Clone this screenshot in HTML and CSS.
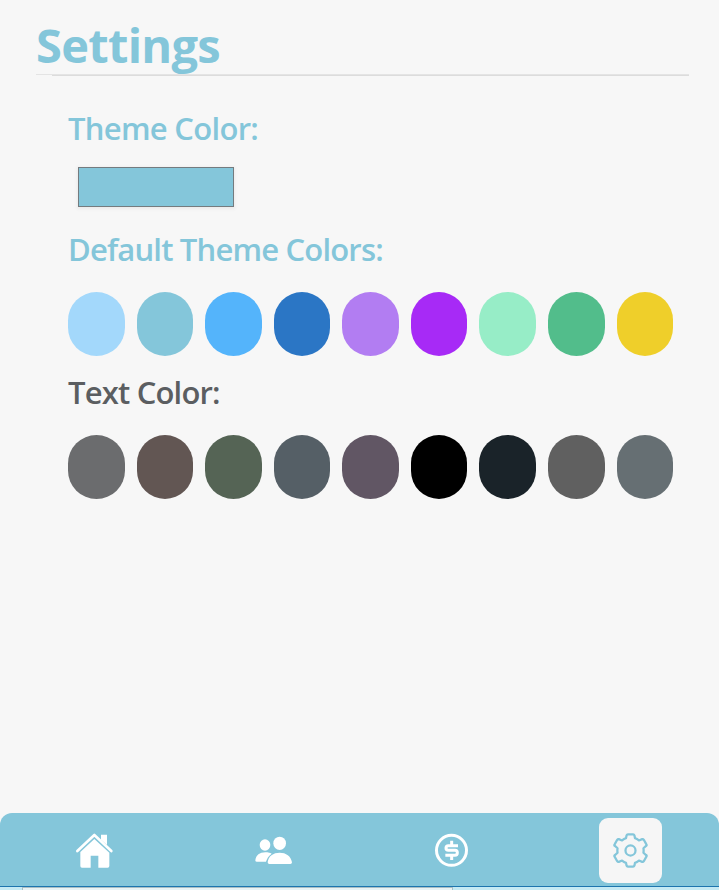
FILE: index.html
```html
<!DOCTYPE html>
<html lang="en">
<head>
<meta charset="utf-8">
<title>Settings</title>
<link rel="stylesheet" href="styles.css">
</head>
<body>
<main>
  <header><h1>Settings</h1><div class="rule"></div></header>
  <section class="options">
    <h2 class="theme-title">Theme Color:</h2>
    <div class="picker"></div>
    <h2 class="defaults-title">Default Theme Colors:</h2>
    <div class="swatches">
      <i style="background:#a3d8fb"></i><i style="background:#84c6da"></i><i style="background:#54b4fb"></i><i style="background:#2b76c5"></i><i style="background:#b27df2"></i><i style="background:#a72af6"></i><i style="background:#97edc7"></i><i style="background:#52bd8b"></i><i style="background:#efcf2a"></i>
    </div>
    <h2 class="text-title">Text Color:</h2>
    <div class="swatches">
      <i style="background:#6b6c6e"></i><i style="background:#625653"></i><i style="background:#556455"></i><i style="background:#555f66"></i><i style="background:#615664"></i><i style="background:#000"></i><i style="background:#1a2329"></i><i style="background:#606060"></i><i style="background:#666f73"></i>
    </div>
  </section>
</main>
<nav>
  <a><svg width="70" height="60" viewBox="0 0 210 180"><path d="M52 93L103 45L154 93" fill="none" stroke="#fff" stroke-width="8" stroke-linecap="round" stroke-linejoin="round"/><path fill="#fff" d="M123 44h18v31l-18-16zM103 57l45 41v40q0 5-5 5h-28v-36H92v36H66q-5 0-5-5V96z"/></svg></a>
  <a class="middle"><svg width="70" height="60" viewBox="0 0 210 180" fill="#fff"><ellipse cx="75" cy="75" rx="16" ry="17"/><ellipse cx="119" cy="70" rx="19" ry="20"/><path d="M46 121c2-16 13-24 30-24 9 0 15 2 19 4-9 6-14 14-17 24H50q-5 0-4-4zM83 127c2-19 17-29 36-29s34 10 37 29q0 5-5 5H88q-5 0-5-5z"/></svg></a>
  <a class="middle"><svg width="70" height="60" viewBox="0 0 210 180" fill="none" stroke="#fff" stroke-width="9"><circle cx="94.500" cy="91" r="45"/><path d="M95 62v12M95 107v13M114 77H85q-7 0-7 7t7 7h20q7 0 7 7.500t-7 7.500H76"/></svg></a>
  <a><span class="active"><svg width="35" height="35" viewBox="-54 -54 108 108" fill="none" stroke="#84c6da" stroke-width="7" stroke-linejoin="round"><path d="M-8-50H8Q11-50 12-47L14-38Q20-36 26-31L36-35Q39-36 41-33L49-19Q51-16 48-14L40-7Q41 0 40 7L48 14Q51 16 49 19L41 33Q39 36 36 35L26 31Q20 36 14 38L12 47Q11 50 8 50H-8Q-11 50-12 47L-14 38Q-20 36-26 31L-36 35Q-39 36-41 33L-49 19Q-51 16-48 14L-40 7Q-41 0-40-7L-48-14Q-51-16-49-19L-41-33Q-39-36-36-35L-26-31Q-20-36-14-38L-12-47Q-11-50-8-50Z"/><circle r="15.500"/></svg></span></a>
</nav>
<footer><div></div></footer>
</body>
</html>
```
FILE: styles.css
```css
* { box-sizing: border-box; }
body {
  margin: 0;
  height: 890px;
  display: flex;
  flex-direction: column;
  overflow: hidden;
  background: #f7f7f7;
  font-family: "Open Sans", "Noto Sans", sans-serif;
  color: #84c6da;
}
main { flex: 1; padding: 0 30px 0 36px; }
header { height: 76px; padding-top: 14px; }
h1 { margin: 0; font-size: 47px; line-height: 62px; height: 60px; font-weight: 700; letter-spacing: -0.7px; }
.rule { width: 653px; height: 2px; border-top: 1px solid #e4e4e4; background: linear-gradient(90deg, transparent 16px, #dcdcdc 16px); }
.options { padding: 0 16px 0 32px; }
h2 { margin: 0; font-size: 31px; line-height: 38px; height: 40px; font-weight: 600; white-space: nowrap; letter-spacing: -0.82px; }
.theme-title { margin-top: 33px; letter-spacing: -0.7px; }
.picker { width: 156px; height: 40px; margin: 18px 0 0 10px; border: 1px solid #747b7f; background: #84c6da; box-shadow: 0 1px 3px 1px #eaeaea; }
.defaults-title { margin-top: 23px; }
.text-title { margin-top: 17px; color: #5b5e61; }
.swatches { display: flex; gap: 12px; margin-top: 22px; width: 605px; }
.swatches i { flex: 1; height: 64px; border-radius: 30px; }
nav { height: 73px; display: grid; grid-template-columns: repeat(4, 179.6px); background: #84c6da; border-radius: 12px 12px 0 0; }
nav a { display: flex; justify-content: center; padding: 7px 0 0 10px; }
nav .middle { padding-left: 12px; }
nav svg { display: block; }
.active { width: 63px; height: 65px; margin-top: -2px; margin-left: -6px; display: grid; place-items: center; border-radius: 9px; background: #f6f6f6; }
footer { height: 4px; border-top: 1px solid #1d75ae; background: #c5eaf4; }
footer div { margin-left: 22px; width: 431px; height: 3px; border: solid #a9bec4; border-width: 1px 1px 0; background: #e9f3f5; }
```
